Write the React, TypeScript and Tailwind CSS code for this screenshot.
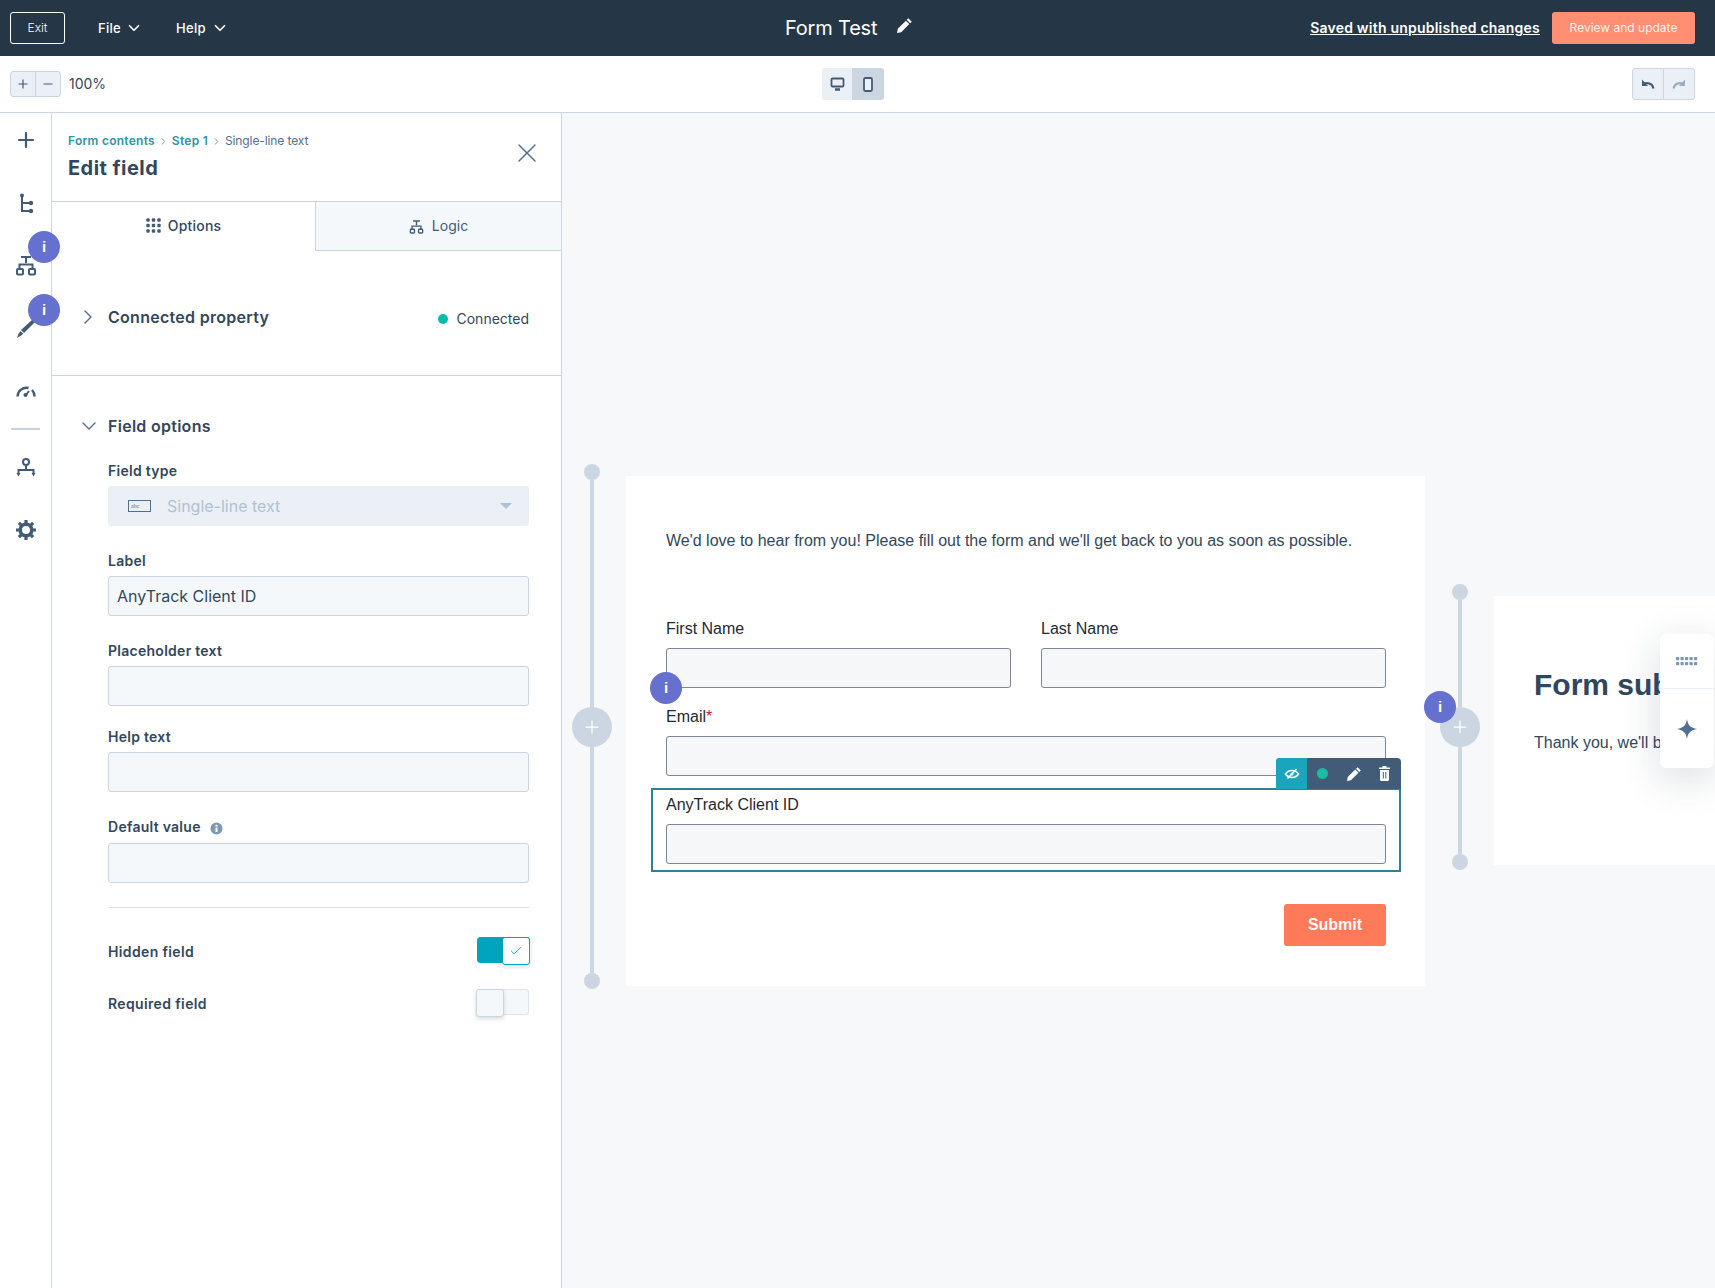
import { ChevronDown, ChevronRight, Check, Minus, Plus, X } from "lucide-react";

const ink = "#425b76";

function TreeIcon() {
  return (
    <svg width="22" height="22" viewBox="0 0 22 22" fill="none" stroke={ink} strokeWidth="2">
      <circle cx="7" cy="3.500" r="2" fill={ink} stroke="none" />
      <path d="M7 4v15h7M7 11h7" />
      <circle cx="16" cy="11" r="2.200" fill={ink} stroke="none" />
      <circle cx="16" cy="19" r="2.200" fill={ink} stroke="none" />
    </svg>
  );
}

function SitemapIcon({ size = 22, color = ink }: { size?: number; color?: string }) {
  return (
    <svg width={size} height={size} viewBox="0 0 22 22" fill="none" stroke={color} strokeWidth="2">
      <path d="M6 3h10M11 3v6M4.500 15v-4.500h13V15" />
      <rect x="2" y="15" width="6" height="5.500" rx="1" />
      <rect x="14" y="15" width="6" height="5.500" rx="1" />
    </svg>
  );
}

function BrushIcon() {
  return (
    <svg width="22" height="22" viewBox="0 0 22 22" fill={ink}>
      <path d="M17.500 2.500l2.500 2.500L9 16l-3-3z" />
      <path d="M5.500 14l2.800 2.800-2.500 2L2 21l1.400-4z" />
    </svg>
  );
}

function GaugeIcon() {
  return (
    <svg width="22" height="22" viewBox="0 0 22 22" fill="none" stroke={ink} strokeWidth="2.400">
      <path d="M2.500 15.500a9 9 0 0 1 11-8.500M17 9a9 9 0 0 1 2.500 6.500" />
      <circle cx="10.500" cy="14" r="2" fill={ink} stroke="none" />
      <path d="M11 14l3-4" strokeWidth="1.800" />
    </svg>
  );
}

function NetworkIcon() {
  return (
    <svg width="22" height="22" viewBox="0 0 22 22" fill="none" stroke={ink} strokeWidth="2">
      <circle cx="11" cy="5" r="3" />
      <path d="M11 8v5M3.500 17v-4h15v4" />
      <path d="M1.500 16h4L3.500 19.500zM16.500 16h4l-2 3.500z" fill={ink} stroke="none" />
    </svg>
  );
}

function GearIcon() {
  return (
    <svg width="22" height="22" viewBox="0 0 22 22" fill="none">
      <circle cx="11" cy="11" r="5.800" stroke={ink} strokeWidth="3.600" />
      <path
        d="M11 1v4M11 17v4M1 11h4M17 11h4M3.900 3.900l2.800 2.800M15.300 15.300l2.800 2.800M3.900 18.100l2.800-2.800M15.300 6.700l2.800-2.800"
        stroke={ink}
        strokeWidth="3.200"
      />
    </svg>
  );
}

function GridDots() {
  const spots = [2, 7.5, 13];
  return (
    <svg width="15" height="15" viewBox="0 0 15 15" fill={ink}>
      {spots.map((y) => spots.map((x) => <rect key={`${x}-${y}`} x={x - 1.7} y={y - 1.7} width="3.400" height="3.400" rx="1" />))}
    </svg>
  );
}

function PencilIcon({ size = 16, color = "#fff" }: { size?: number; color?: string }) {
  return (
    <svg width={size} height={size} viewBox="0 0 16 16" fill={color}>
      <path d="M11.600 1.200l3.200 3.200-1.500 1.500-3.200-3.200zM9.300 3.500l3.200 3.200-7.600 7.600L1 15l.7-3.900z" />
    </svg>
  );
}

function InfoBadge({ className }: { className: string }) {
  return (
    <div
      className={`absolute z-20 flex h-8 w-8 items-center justify-center rounded-full bg-[#6570cf] text-[15px] font-bold text-white [font-family:'Liberation_Sans',sans-serif] ${className}`}
    >
      i
    </div>
  );
}

function SidebarNav() {
  return (
    <nav className="relative flex w-[52px] shrink-0 flex-col items-center border-r border-[#cbd6e2] bg-white pt-[15px]">
      <Plus size={24} color={ink} strokeWidth={2.2} />
      <div className="mt-[40px]">
        <TreeIcon />
      </div>
      <div className="mt-[40px]">
        <SitemapIcon />
      </div>
      <div className="mt-[41px]">
        <BrushIcon />
      </div>
      <div className="mt-[42px]">
        <GaugeIcon />
      </div>
      <div className="mt-[25px] h-0.5 w-[29px] bg-[#c8d0d9]" />
      <div className="mt-[27px]">
        <NetworkIcon />
      </div>
      <div className="mt-[40px]">
        <GearIcon />
      </div>
      <InfoBadge className="left-7 top-[118px]" />
      <InfoBadge className="left-7 top-[181px]" />
    </nav>
  );
}

function Field({
  label,
  value = "",
  info = false,
  className = "",
}: {
  label: string;
  value?: string;
  info?: boolean;
  className?: string;
}) {
  return (
    <div className={className}>
      <div className="flex h-5 items-center text-sm font-semibold leading-5 tracking-[0.27px] text-[#33475b]">
        {label}
        {info && (
          <svg className="ml-[9px] mt-0.5" width="13" height="13" viewBox="0 0 13 13">
            <circle cx="6.500" cy="6.500" r="6" fill="#7c98b6" />
            <rect x="5.500" y="5.500" width="2" height="4.500" fill="#fff" />
            <rect x="5.500" y="2.800" width="2" height="1.800" fill="#fff" />
          </svg>
        )}
      </div>
      <input
        readOnly
        value={value}
        className={`${info ? "mt-1.5" : "mt-[5px]"} h-10 w-full rounded-[3px] border border-[#ccd4dc] bg-[#f5f8fa] px-2 text-base text-[#33475b] outline-none`}
      />
    </div>
  );
}

function Toggle({ on }: { on: boolean }) {
  return (
    <div
      className={`relative h-[26px] w-[53px] rounded-[3px] border ${
        on ? "-mr-px border-[#00a4bd] bg-[#00a4bd]" : "border-[#dfe3eb] bg-[#f5f8fa]"
      }`}
    >
      <div
        className={`absolute -top-px flex h-[28px] w-[28px] items-center justify-center rounded-[3px] border shadow-[0_2px_4px_rgba(45,62,80,0.18)] ${
          on ? "-right-px border-[#00a4bd] bg-white" : "-left-px border-[#cbd6e2] bg-[#f5f8fa]"
        }`}
      >
        {on && <Check size={14} color="#00a4bd" strokeWidth={1.6} />}
      </div>
    </div>
  );
}

function EditPanel() {
  return (
    <aside className="flex w-[510px] shrink-0 flex-col border-r border-[#cbd6e2] bg-white">
      <div className="relative h-[88px] pl-[16px] pt-[19px]">
        <div className="flex h-[18px] items-center text-xs leading-[18px]">
          <span className="font-semibold tracking-[0.25px] text-[#2b95a6]">Form contents</span>
          <ChevronRight size={11} color="#7c98b6" className="mx-[3px]" />
          <span className="font-semibold tracking-[0.25px] text-[#2b95a6]">Step 1</span>
          <ChevronRight size={11} color="#7c98b6" className="mx-[3px]" />
          <span className="tracking-[-0.1px] text-[#516f90]">Single-line text</span>
        </div>
        <h1 className="mt-[6px] text-xl font-bold leading-6 tracking-[0.45px] text-[#33475b]">Edit field</h1>
        <X size={32} color="#516f90" strokeWidth={1.1} className="absolute right-[18px] top-[24px]" />
      </div>

      <div className="flex h-[50px] border-t border-[#cbd6e2]">
        <div className="flex w-[264px] items-center justify-center gap-[7px] border-r border-[#cbd6e2] pb-0.5 text-sm font-medium tracking-[0.2px] text-[#33475b]">
          <GridDots />
          Options
        </div>
        <div className="flex flex-1 items-center justify-center gap-2 border-b border-[#cbd6e2] bg-[#f5f8fa] text-sm text-[#425b76]">
          <SitemapIcon size={15} />
          Logic
        </div>
      </div>

      <div className="flex h-[125px] items-center border-b border-[#cbd6e2] pl-[24px] pr-[32px] pt-[10px]">
        <ChevronRight size={24} color="#516f90" strokeWidth={1.4} className="-mt-0.5" />
        <div className="-mt-0.5 ml-2 flex-1 text-base font-semibold tracking-[0.28px] text-[#33475b]">Connected property</div>
        <span className="mt-0.5 h-2.5 w-2.5 rounded-full bg-[#00bda5]" />
        <span className="ml-2 mt-0.5 text-sm text-[#33475b]">Connected</span>
      </div>

      <div className="px-[32px] pt-[38px]">
        <div className="flex h-6 items-center">
          <ChevronDown size={24} color="#516f90" strokeWidth={1.4} className="-ml-[7px]" />
          <div className="ml-[7px] text-base font-semibold tracking-[0.28px] text-[#33475b]">Field options</div>
        </div>
        <div className="pl-[24px]">
          <div className="mt-[23px] flex h-5 items-center text-sm font-semibold tracking-[0.27px] text-[#33475b]">Field type</div>
          <div className="mt-[5px] flex h-10 items-center rounded-[3px] bg-[#eaf0f6] pl-5 pr-[17px]">
            <svg width="23" height="12" viewBox="0 0 23 12" fill="none">
              <rect x="0.500" y="0.500" width="22" height="11" stroke="#516f90" />
              <text x="3" y="8" fontSize="6" fill="#516f90" fontFamily="Liberation Serif, serif">
                abc
              </text>
            </svg>
            <span className="ml-4 flex-1 text-base text-[#b0c1d4]">Single-line text</span>
            <span className="h-0 w-0 border-x-[6px] border-t-[6px] border-x-transparent border-t-[#b0c1d4]" />
          </div>
          <Field label="Label" value="AnyTrack Client ID" className="mt-[25px]" />
          <Field label="Placeholder text" className="mt-[25px]" />
          <Field label="Help text" className="mt-[21px]" />
          <Field label="Default value" info className="mt-[25px]" />
          <div className="mt-6 h-px bg-[#dfe3eb]" />
          <div className="mt-[28px] flex h-[28px] items-center justify-between text-sm font-semibold tracking-[0.36px] text-[#33475b]">
            <span className="mt-1">Hidden field</span>
            <Toggle on />
          </div>
          <div className="mt-6 flex h-[28px] items-center justify-between text-sm font-semibold tracking-[0.36px] text-[#33475b]">
            <span className="mt-1">Required field</span>
            <Toggle on={false} />
          </div>
        </div>
      </div>
    </aside>
  );
}

function Timeline({ className }: { className: string }) {
  return (
    <div className={`flex w-10 shrink-0 flex-col items-center ${className}`}>
      <div className="h-4 w-4 rounded-full bg-[#cbd6e2]" />
      <div className="w-1 flex-1 bg-[#cbd6e2]" />
      <div className="flex h-10 w-10 items-center justify-center rounded-full bg-[#cbd6e2]">
        <Plus size={20} color="#fff" strokeWidth={1.5} />
      </div>
      <div className="w-1 flex-1 bg-[#cbd6e2]" />
      <div className="h-4 w-4 rounded-full bg-[#cbd6e2]" />
    </div>
  );
}

function FormInput({ label, required = false }: { label: string; required?: boolean }) {
  return (
    <div className="flex-1">
      <div className="h-6 text-base leading-6 text-[#1f2933]">
        {label}
        {required && <span className="text-[#d0103a]">*</span>}
      </div>
      <div className="mt-[7px] h-10 rounded-[3px] border border-[#7e8791] bg-[#f5f7f9]" />
    </div>
  );
}

function FormCanvas() {
  return (
    <main className="relative flex flex-1 items-start overflow-hidden bg-[#f6f8fa] pl-[10px] pt-[351px]">
      <Timeline className="h-[525px]" />
      <div className="relative ml-[14px] mt-[12px] h-[510px] w-[799px] shrink-0 bg-white pl-10 pr-[39px] pt-[53px] [font-family:'Liberation_Sans',sans-serif]">
        <p className="text-base leading-6 text-[#33475b]">
          We'd love to hear from you! Please fill out the form and we'll get back to you as soon as possible.
        </p>
        <div className="mt-[64px] flex gap-[30px]">
          <FormInput label="First Name" />
          <FormInput label="Last Name" />
        </div>
        <div className="mt-[17px]">
          <FormInput label="Email" required />
        </div>
        <div className="relative -mx-[15px] mt-[12px] h-[84px] border-2 border-[#2f8296] px-[13px] pt-[3px]">
          <FormInput label="AnyTrack Client ID" />
          <div className="absolute -right-[2px] -top-[32px] flex h-[31px] w-[125px] overflow-hidden rounded-t-[4px] bg-[#425b76]">
            <div className="flex w-[31px] items-center justify-center bg-[#1aa5bd]">
              <svg width="16" height="16" viewBox="0 0 16 16" fill="none" stroke="#fff" strokeWidth="1.600">
                <path d="M1.500 8s2.400-3.500 6.500-3.500S14.500 8 14.500 8s-2.400 3.500-6.500 3.500S1.500 8 1.500 8z" />
                <circle cx="8" cy="8" r="1.500" fill="#fff" stroke="none" />
                <path d="M3.500 12.500L12.500 3" />
              </svg>
            </div>
            <div className="flex w-[31px] items-center justify-center">
              <span className="h-[11px] w-[11px] rounded-full bg-[#1dbb9f]" />
            </div>
            <div className="flex w-[31px] items-center justify-center">
              <PencilIcon size={16} />
            </div>
            <div className="flex w-[31px] items-center justify-center">
              <svg width="11" height="15" viewBox="0 0 11 15" fill="#fff">
                <path
                  d="M3.500 0h4v1.500h3.500V3H0V1.500h3.500zM1 4h9v9.500a1.500 1.500 0 0 1-1.500 1.500h-6A1.500 1.500 0 0 1 1 13.500zm2.800 2v6.500h1V6zm2.500 0v6.500h1V6z"
                  fillRule="evenodd"
                />
              </svg>
            </div>
          </div>
        </div>
        <div className="mt-[32px] flex justify-end">
          <div className="flex h-[42px] w-[102px] items-center justify-center rounded-[3px] bg-[#ff7a59] text-base font-bold text-white">
            Submit
          </div>
        </div>
        <InfoBadge className="left-6 top-[196px]" />
      </div>
      <Timeline className="ml-[15px] mt-[120px] h-[286px]" />
      <div className="ml-[14px] mt-[132px] h-[269px] w-[400px] shrink-0 bg-white pl-10 pt-[69px] text-[#33475b] [font-family:'Liberation_Sans',sans-serif]">
        <div className="w-[140px] overflow-hidden">
          <h2 className="whitespace-nowrap text-[30px] font-bold leading-10 text-[#2f475d]">Form submitted</h2>
          <p className="mt-[26px] whitespace-nowrap text-base leading-6">Thank you, we'll be in touch soon.</p>
        </div>
      </div>

      <InfoBadge className="left-[862px] top-[578px]" />
      <div className="absolute right-px top-[521px] z-10 w-[54px] rounded-[6px] bg-white shadow-[0_10px_40px_rgba(45,62,80,0.18)]">
        <div className="flex h-[55px] items-center justify-center border-b border-[#eaf0f6]">
          <svg width="22" height="9" viewBox="0 0 22 9" fill="#7c98b6">
            {[0, 4.5, 9, 13.5, 18].map((x) =>
              [0, 5].map((y) => <rect key={`${x}-${y}`} x={x} y={y} width="3.200" height="3.200" rx="0.600" />)
            )}
          </svg>
        </div>
        <div className="flex h-[79px] items-center justify-center">
          <svg width="20" height="20" viewBox="0 0 20 20" fill="#4f6f96">
            <path d="M10 0c.8 6 3.500 9 10 10-6.500 1-9.200 4-10 10-.8-6-3.500-9-10-10 6.500-1 9.200-4 10-10z" />
          </svg>
        </div>
      </div>
    </main>
  );
}

export default function App() {
  return (
    <div className="flex h-[1288px] w-full flex-col overflow-hidden bg-white [font-family:Inter,sans-serif]">
      <header className="relative flex h-14 shrink-0 items-center bg-[#253746] pl-[10px] pr-5 text-white">
        <div className="flex h-8 w-[55px] items-center justify-center rounded-[3px] border border-white text-xs font-light">Exit</div>
        <div className="ml-[33px] mt-0.5 flex items-center text-[13px] font-medium tracking-[0.3px]">
          File
          <ChevronDown size={18} strokeWidth={2.2} className="ml-1 -mt-0.5" />
        </div>
        <div className="ml-[33px] mt-0.5 flex items-center text-[13px] font-medium tracking-[0.3px]">
          Help
          <ChevronDown size={18} strokeWidth={2.2} className="ml-[5px] -mt-0.5" />
        </div>
        <div className="absolute left-[785px] flex items-center text-xl tracking-[-0.2px]">
          Form Test
          <span className="mb-1.5 ml-[19px]">
            <PencilIcon size={17} />
          </span>
        </div>
        <span className="ml-auto text-sm font-semibold tracking-[0.22px] underline">Saved with unpublished changes</span>
        <div className="ml-3 flex h-8 w-[143px] items-center justify-center rounded-[3px] bg-[#ff8f73] text-xs text-[#fff1ec]">
          Review and update
        </div>
      </header>

      <div className="relative flex h-[57px] shrink-0 items-center border-b border-[#cbd6e2] pl-[10px] pr-5">
        <div className="flex h-[26px] w-[51px] overflow-hidden rounded-[3px] border border-[#cbd6e2] bg-[#eaf0f6]">
          <div className="flex flex-1 items-center justify-center border-r border-[#cbd6e2]">
            <Plus size={14} color={ink} strokeWidth={2} />
          </div>
          <div className="flex flex-1 items-center justify-center">
            <Minus size={14} color={ink} strokeWidth={2} />
          </div>
        </div>
        <span className="ml-2 text-sm text-[#33475b]">100%</span>
        <div className="absolute left-[822px] flex h-8 w-[62px] overflow-hidden rounded-[3px] bg-[#eaf0f6]">
          <div className="flex w-[30px] items-center justify-center">
            <svg width="15" height="14" viewBox="0 0 15 14" fill="none" stroke={ink} strokeWidth="1.800">
              <rect x="1.500" y="1.500" width="12" height="8" rx="1" />
              <path d="M5 12.500h5" strokeWidth="2.400" />
            </svg>
          </div>
          <div className="flex flex-1 items-center justify-center bg-[#cbd6e2]">
            <svg width="12" height="15" viewBox="0 0 12 15" fill="#eaf0f6" stroke={ink} strokeWidth="1.800">
              <rect x="2" y="1" width="8" height="13" rx="1.500" />
            </svg>
          </div>
        </div>
        <div className="ml-auto flex h-8 w-[63px] overflow-hidden rounded-[3px] border border-[#cbd6e2] bg-[#eaf0f6]">
          <div className="flex flex-1 items-center justify-center border-r border-[#cbd6e2]">
            <svg width="14" height="12" viewBox="0 0 14 12" fill="none" stroke={ink} strokeWidth="2.200">
              <path d="M12.500 10.500C11.500 6.500 8 4.500 3 5.500" />
              <path d="M1 1.500v6.500h6z" fill={ink} stroke="none" />
            </svg>
          </div>
          <div className="flex flex-1 items-center justify-center">
            <svg width="14" height="12" viewBox="0 0 14 12" fill="none" stroke="#99acc2" strokeWidth="2.200">
              <path d="M1.500 10.500C2.500 6.500 6 4.500 11 5.500" />
              <path d="M13 1.500v6.500H7z" fill="#99acc2" stroke="none" />
            </svg>
          </div>
        </div>
      </div>

      <div className="flex min-h-0 flex-1">
        <SidebarNav />
        <EditPanel />
        <FormCanvas />
      </div>
    </div>
  );
}
